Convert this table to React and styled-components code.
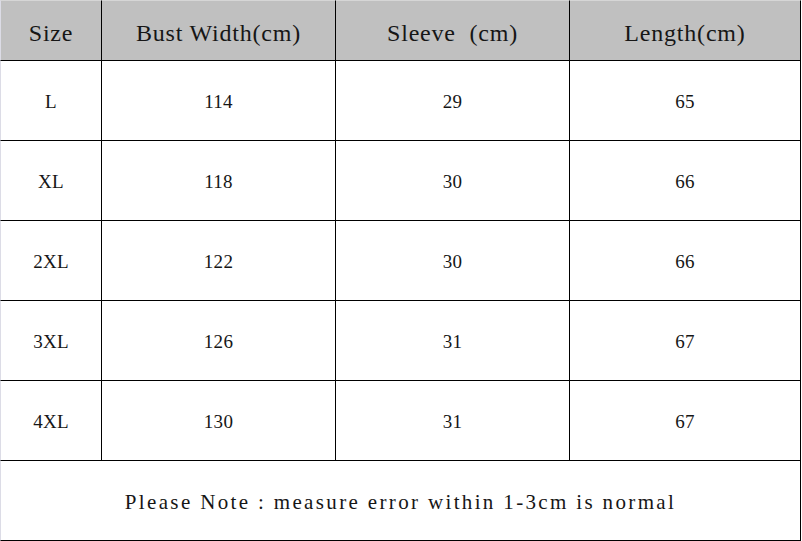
import React from "react";
import styled, { createGlobalStyle } from "styled-components";

const rows = [
    { size: "L", bust: 114, sleeve: 29, length: 65 },
    { size: "XL", bust: 118, sleeve: 30, length: 66 },
    { size: "2XL", bust: 122, sleeve: 30, length: 66 },
    { size: "3XL", bust: 126, sleeve: 31, length: 67 },
    { size: "4XL", bust: 130, sleeve: 31, length: 67 },
];

const App = () => {
    return (
        <>
            <GlobalStyle />
            <Table>
                <HeadCell first>Size</HeadCell>
                <HeadCell>Bust Width(cm)</HeadCell>
                <HeadCell>{"Sleeve  (cm)"}</HeadCell>
                <HeadCell>Length(cm)</HeadCell>
                {rows.map((row) => (
                    <React.Fragment key={row.size}>
                        <Cell first>{row.size}</Cell>
                        <Cell>{row.bust}</Cell>
                        <Cell>{row.sleeve}</Cell>
                        <Cell>{row.length}</Cell>
                    </React.Fragment>
                ))}
                <Note>Please Note : measure error within 1-3cm is normal</Note>
            </Table>
        </>
    );
};

const GlobalStyle = createGlobalStyle`
   body {
      margin: 0;
      background: #ffffff;
      font-family: "Liberation Serif", "Noto Sans CJK SC", serif;
      color: #161616;
   }
`;

const Table = styled.div`
   display: grid;
   grid-template-columns: 102px 234px 234px 231px;
   grid-template-rows: 61px repeat(6, 80px);
   width: 801px;
`;

const BaseCell = styled.div`
   display: flex;
   align-items: center;
   justify-content: center;
   border-right: 1px solid #000;
   border-bottom: 1px solid #000;
   border-left: ${(p) => (p.first ? "1px solid #dcdce6" : "none")};
   box-sizing: border-box;
   white-space: pre;
`;

const HeadCell = styled(BaseCell)`
   background: #c0c0c0;
   font-size: 24px;
   letter-spacing: 0.8px;
   padding-top: 5px;
   border-top: 1px solid #d6d6d6;
`;

const Cell = styled(BaseCell)`
   font-size: 19px;
   letter-spacing: 0.3px;
   padding-top: 3px;
`;

const Note = styled(BaseCell)`
   grid-column: 1 / -1;
   border-left: 1px solid #dcdce6;
   font-size: 21px;
   letter-spacing: 2.35px;
   padding-top: 3px;
`;

export default App;
